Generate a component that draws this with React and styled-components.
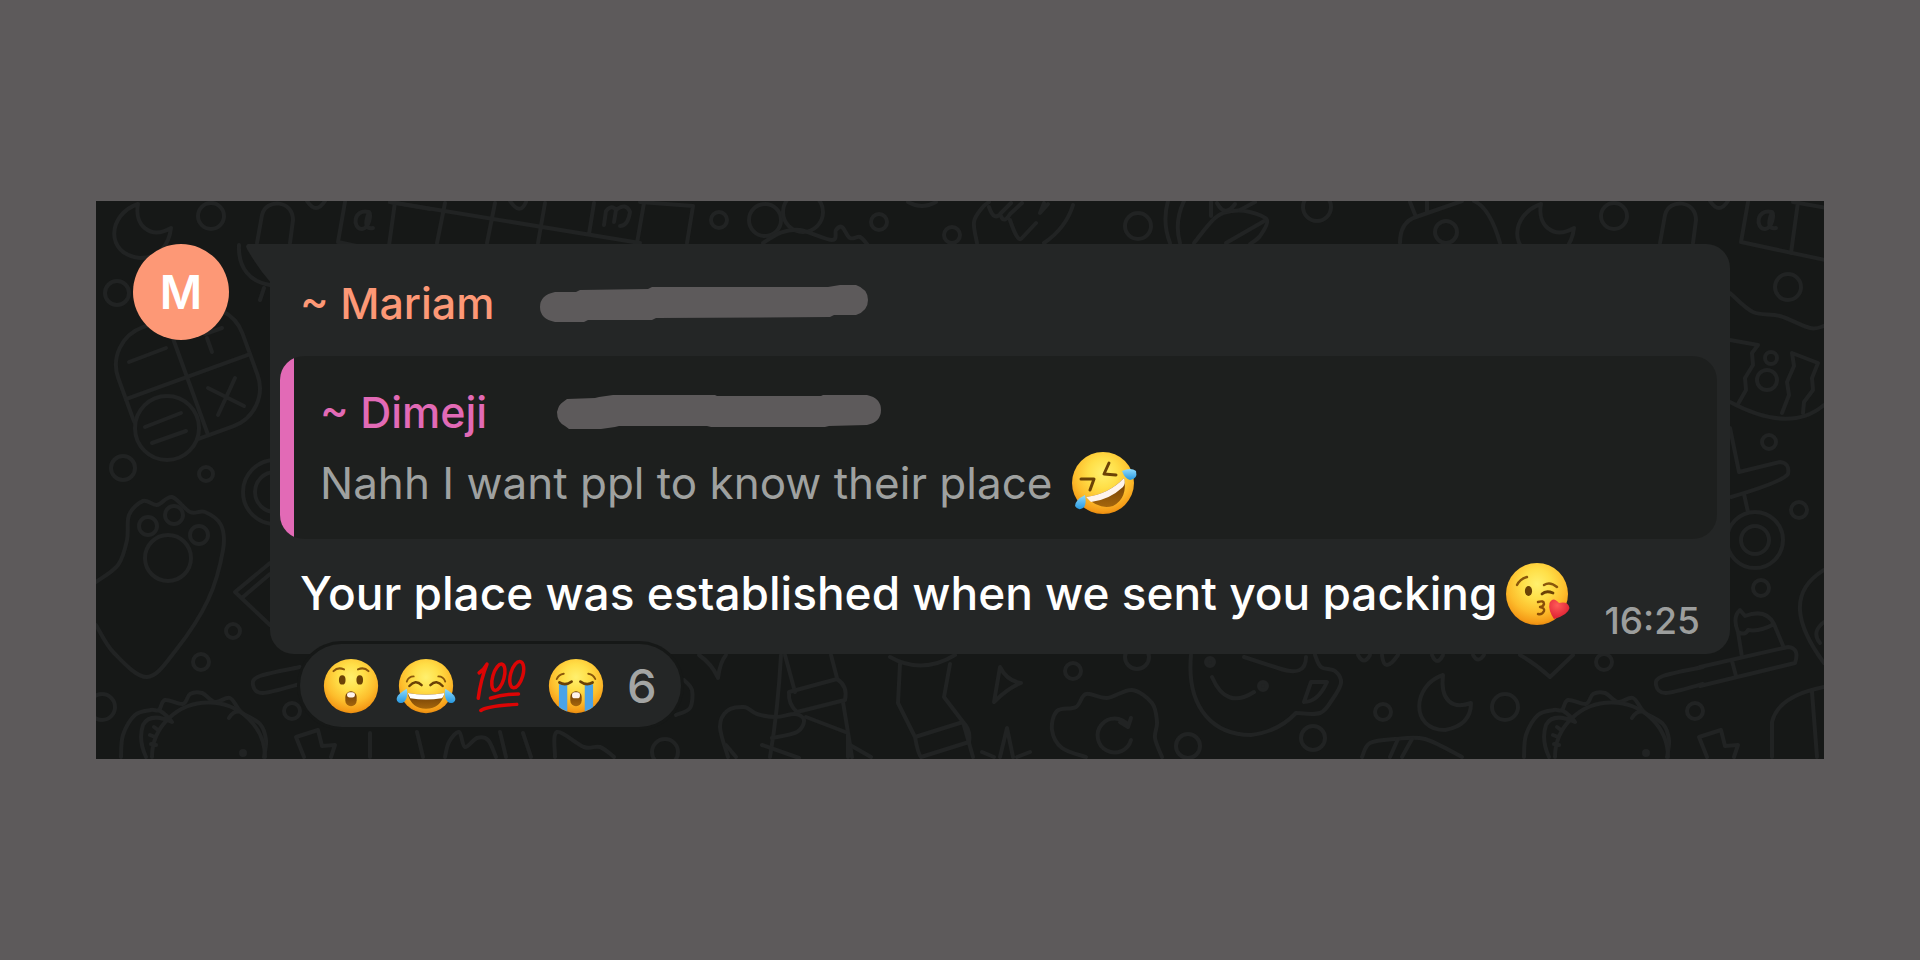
import React from "react";
import styled, { createGlobalStyle } from "styled-components";

const GlobalStyle = createGlobalStyle`
  *, *::before, *::after { box-sizing: border-box; }
  body {
    margin: 0;
    background: #5d5a5b;
    font-family: Inter, "Liberation Sans", sans-serif;
  }
`;

const Page = styled.main`
  min-height: 100vh;
  padding: 0 5%;
  display: flex;
  align-items: center;
`;

const Chat = styled.section`
  position: relative;
  isolation: isolate;
  flex: 1;
  min-width: 0;
  display: flex;
  gap: 41px;
  align-items: flex-start;
  padding: 43px 94px 32px 37px;
  background: #161817;
  overflow: hidden;
`;

const Wallpaper = styled.svg`
  position: absolute;
  inset: 0;
  z-index: -1;
  width: 100%;
  height: 100%;
  fill: none;
  stroke: #212323;
  stroke-width: 4;
  stroke-linecap: round;
  stroke-linejoin: round;
`;

const Avatar = styled.div`
  flex: none;
  display: grid;
  place-items: center;
  width: 96px;
  height: 96px;
  border-radius: 50%;
  background: #fd9876;
  color: #fff;
  font-size: 46px;
  font-weight: 600;
`;

const Message = styled.article`
  flex: 1;
  min-width: 0;
`;

const Bubble = styled.div`
  position: relative;
  background: #242626;
  border-radius: 0 24px 24px 24px;
`;

const Tail = styled.svg`
  position: absolute;
  top: 0;
  right: 100%;
  width: 24px;
  height: 40px;
  fill: #242626;
`;

const Header = styled.header`
  display: flex;
  align-items: center;
  padding: 32px 30px 26px;
`;

const Sender = styled.span`
  min-width: 237px;
  color: ${(p) => p.$color};
  font-size: 43px;
  font-weight: 500;
  line-height: 54px;
  white-space: nowrap;
`;

const Redaction = styled.svg`
  flex: none;
  width: 332px;
  height: 40px;
  fill: #5d5a5b;
  overflow: visible;
`;

const Quote = styled.blockquote`
  margin: 0 13px 0 10px;
  padding: 20px 28px 21px 40px;
  border-radius: 24px;
  background: linear-gradient(to right, #e26ab6 14px, #1d1f1e 14px);
`;

const QuoteRow = styled.div`
  display: flex;
  align-items: center;
  gap: ${(p) => p.$gap || 0}px;
  height: 71px;
`;

const QuoteText = styled.p`
  margin: 0;
  color: #9fa1a0;
  font-size: 44px;
  line-height: 54px;
  white-space: nowrap;
`;

const Body = styled.div`
  display: flex;
  align-items: center;
  gap: 8px;
  padding: 20px 30px 26px;
`;

const BodyText = styled.p`
  margin: 0;
  color: #fff;
  font-size: 46px;
  font-weight: 500;
  line-height: 69px;
  white-space: nowrap;
`;

const Time = styled.time`
  align-self: flex-end;
  margin: 0 0 -6px auto;
  color: #9c9e9d;
  font-size: 37px;
  font-weight: 500;
  line-height: 26px;
`;

const Reactions = styled.button`
  position: relative;
  display: flex;
  align-items: center;
  gap: 19px;
  height: 83px;
  margin: -10px 0 0 30px;
  padding: 0 24px 0 23px;
  border: 0;
  border-radius: 42px;
  background: #242626;
  box-shadow: 0 0 0 3px #161817;
  color: #a3a5a4;
  font: inherit;
  font-size: 47px;
  font-weight: 500;
`;

const Count = styled.span`
  margin-left: 4px;
`;

const EmojiArt = styled.svg`
  flex: none;
  width: ${(p) => p.$size}px;
  height: ${(p) => p.$size}px;
  overflow: visible;
  fill: none;
  stroke-linecap: round;
  stroke-linejoin: round;
`;

/* Smooth line through a flat list of x, y pairs. */
const curve = (flat) => {
  const pts = [];
  for (let i = 0; i < flat.length; i += 2) pts.push([flat[i], flat[i + 1]]);
  const n = pts.length;
  const at = (i) => pts[Math.max(0, Math.min(n - 1, i))];
  let d = `M${pts[0][0]} ${pts[0][1]}`;
  for (let i = 0; i < n - 1; i++) {
    const [a, b, c, e] = [at(i - 1), at(i), at(i + 1), at(i + 2)];
    d += ` C${b[0] + (c[0] - a[0]) / 6} ${b[1] + (c[1] - a[1]) / 6} ${c[0] - (e[0] - b[0]) / 6} ${c[1] - (e[1] - b[1]) / 6} ${c[0]} ${c[1]}`;
  }
  return d;
};

/* Doodles that appear at both ends of the wallpaper tile. */
function TileStart() {
  return (
    <g>
      <path d="M138 204 C108 214 104 254 140 258 C160 258 169 244 171 228 C150 240 134 225 138 204Z" />
      <circle cx="211" cy="216" r="13" />
      <path d="M257 243 L262 215 C266 198 293 200 293 220 L290 243" />
      <path d="M307 201 Q316 215 325 201" />
      <path d="M345 202 L338 242 L422 260 M395 202 L388 253 M390 202 L430 209" />
      <path d="M369 212 C353 208 352 229 362 229 C370 228 371 214 369 212 Q362 230 373 228" />
      <path d={curve([300, 667, 260, 676, 253, 685, 263, 693, 300, 684])} />
      <circle cx="201" cy="662" r="8" />
      <circle cx="292" cy="711" r="8" />
      <circle cx="102" cy="707" r="13" />
      <path d={curve([121, 757, 123, 735, 135, 715, 151, 710, 159, 710, 165, 700, 183, 704, 190, 694, 202, 693, 215, 702, 230, 698, 241, 712, 260, 724, 266, 740, 264, 757])} />
      <path d="M152 757 A56 54 0 0 1 265 757 M159 710 Q168 716 172 722 Q150 712 143 725 Q138 740 146 757 M229 718 Q234 710 241 712 M154 727 l4 3 M150 735 l5 2 M151 744 l5 1" />
      <circle cx="243" cy="753" r="2" />
      <path d="M304 757 L296 737 L318 730 L322 746 L335 745 L331 757" />
    </g>
  );
}

function ChatWallpaper() {
  return (
    <Wallpaper viewBox="96 201 1728 558" preserveAspectRatio="xMidYMid slice" aria-hidden="true">
      <TileStart />
      <g transform="translate(1403 0)">
        <TileStart />
      </g>

      <circle cx="117" cy="293" r="12" />
      <circle cx="123" cy="468" r="12" />
      <circle cx="206" cy="474" r="7" />
      <path d="M239 245 C238 268 250 282 270 285 M264 288 L260 300" />
      <g transform="rotate(-20 187 377)">
        <rect x="122" y="315" width="132" height="124" rx="40" />
        <path d="M187 315 V439 M122 377 H254" />
      </g>
      <circle cx="167" cy="428" r="32" fill="#161817" />
      <path d="M129 362 L166 348 M145 427 L181 413 M152 443 L186 431 M208 388 L244 406 M235 378 L218 415 M207 338 L212 352 M205 334 L222 328" />
      <circle cx="275" cy="492" r="32" />
      <circle cx="275" cy="492" r="20" />

      <path d={curve([96, 582, 118, 565, 127, 540, 129, 515, 143, 501, 157, 505, 172, 497, 190, 512, 205, 512, 221, 525, 223, 550, 208, 600, 176, 650, 147, 677, 114, 653, 96, 625])} />
      <circle cx="148" cy="526" r="9" />
      <circle cx="174" cy="515" r="9" />
      <circle cx="199" cy="535" r="9" />
      <circle cx="168" cy="558" r="23" />
      <path d="M270 563 L235 592 L270 625 M270 574 L243 597" />
      <circle cx="233" cy="631" r="7" />

      <path d="M390 202 L640 243 M445 203 L437 243 M495 203 L487 243 M545 203 L538 243 M594 203 L589 234 M644 203 L637 243 M693 206 L687 243 M640 202 L693 206" />
      <path d="M604 225 L606 211 Q612 204 616 210 L614 222 M616 210 Q626 202 630 212 Q628 226 620 226 M510 201 Q520 216 526 202" />
      <circle cx="719" cy="220" r="8" />
      <circle cx="765" cy="220" r="16" />
      <circle cx="803" cy="212" r="20" />
      <path d={curve([763, 243, 780, 233, 800, 230, 832, 240, 836, 230, 842, 227, 850, 238, 860, 237, 867, 244])} />
      <circle cx="879" cy="222" r="8" />
      <circle cx="952" cy="235" r="8" />
      <path d="M908 202 Q922 210 936 202" />
      <path d={curve([977, 243, 974, 222, 982, 208, 989, 202])} />
      <path d="M989 207 Q994 222 1001 213 L1011 203 M1001 216 Q1004 224 1010 214 L1022 203 M1010 220 Q1018 244 1022 238 L1036 223 M1044 203 L1040 213 L1048 204 M1073 205 Q1066 228 1044 243" />
      <circle cx="1138" cy="226" r="13" />
      <path d="M1168 201 Q1162 222 1170 243 M1184 201 Q1174 222 1180 243 M1211 202 V216 M1226 243 L1266 220" />
      <path d={curve([1194, 243, 1215, 218, 1232, 211, 1250, 212, 1267, 220, 1260, 236, 1250, 244])} />
      <path d="M1217 203 Q1225 218 1235 204 M1240 210 L1255 202" />
      <circle cx="1317" cy="207" r="14" />
      <path d="M1400 243 Q1400 222 1416 217 L1462 201 M1410 202 L1416 217 M1427 202 V213 M1474 201 Q1490 208 1500 243" />
      <circle cx="1446" cy="232" r="11" />

      <path d="M370 733 V757 M417 732 L423 757 M500 732 L506 757 M523 733 L531 757" />
      <path d={curve([445, 757, 449, 742, 459, 732, 465, 747, 477, 738, 488, 740, 496, 757])} />
      <path d={curve([555, 757, 557, 732, 584, 747, 600, 747, 614, 757])} />
      <circle cx="665" cy="752" r="13" />
      <path d={curve([684, 680, 692, 690, 690, 708, 676, 715])} />
      <path d="M699 655 Q712 664 718 678 Q720 662 726 655" />
      <path d="M781 655 Q778 710 770 757 M785 655 L795 692 M831 655 L837 678 M843 702 L852 757" />
      <path d="M789 692 L837 679 Q848 686 845 700 L797 712 Q788 704 789 692Z" />
      <path d={curve([728, 757, 720, 727, 727, 711, 744, 707, 757, 714, 776, 717, 795, 714, 804, 720, 797, 732, 772, 738])} />
      <path d="M806 717 L848 733 V757 M850 745 L871 757 M762 745 L799 758 M726 745 L736 757" />
      <path d="M890 657 Q922 675 955 655 M900 664 L898 703 L915 737 Q918 754 921 757 L969 742 M950 664 L944 697 L963 722 L973 757 M915 737 L963 722 Q971 730 969 742" />
      <path d="M1000 667 Q1007 681 1021 683 Q1008 688 994 702Z" />
      <circle cx="1073" cy="671" r="8" />
      <circle cx="1137" cy="657" r="12" />
      <circle cx="1188" cy="746" r="12" />
      <path d="M982 752 L994 757 M1000 757 L1007 728 L1013 757 M1017 757 L1030 752" />
      <path d={curve([1086, 757, 1062, 748, 1052, 730, 1057, 711, 1076, 707, 1086, 694, 1107, 698, 1132, 690, 1152, 703, 1157, 722, 1155, 738, 1162, 757])} />
      <path d="M1128 725 A17 17 0 1 0 1131 740 M1131 718 L1128 727 L1120 722" />

      <path d="M1191 655 C1186 710 1215 735 1251 735 Q1278 732 1296 713" />
      <path d={curve([1296, 713, 1320, 713, 1332, 700, 1341, 683, 1335, 671, 1321, 667, 1315, 655])} />
      <path d="M1244 657 L1278 668 Q1306 678 1306 657 M1311 682 L1304 702 Q1318 702 1327 682Z M1212 677 Q1226 710 1254 692" />
      <circle cx="1210" cy="662" r="4" fill="#212323" />
      <circle cx="1263" cy="686" r="4" fill="#212323" />
      <circle cx="1383" cy="712" r="8" />
      <circle cx="1313" cy="738" r="12" />
      <path d="M1358 655 Q1364 666 1370 655 M1382 655 Q1384 675 1398 655 M1432 655 Q1437 667 1443 655 M1473 655 Q1478 664 1484 655" />
      <path d="M1443 675 C1412 685 1410 730 1445 730 C1462 727 1471 718 1471 703 C1452 710 1440 700 1443 675Z" />
      <path d="M1520 655 Q1536 664 1550 677 L1573 655" />
      <path d={curve([1362, 757, 1370, 743, 1395, 739, 1425, 739, 1462, 757])} />
      <path d="M1398 739 L1390 757 M1412 739 L1402 757" />

      <circle cx="1788" cy="287" r="13" />
      <path d={curve([1730, 293, 1753, 312, 1780, 316, 1810, 328, 1824, 326])} />
      <path d="M1730 340 L1758 345 L1752 353 L1753 365 L1745 378 L1746 390 L1738 404 M1792 353 L1818 363 L1812 378 L1813 390 L1804 402 L1803 413 M1792 353 L1794 366 L1787 382 L1789 395 L1782 413" />
      <path d="M1730 402 Q1790 434 1824 405" />
      <circle cx="1767" cy="380" r="10" />
      <circle cx="1771" cy="358" r="6" />
      <circle cx="1769" cy="442" r="7" />
      <path d="M1730 428 L1739 472 L1780 462 Q1790 463 1788 474 Q1782 482 1731 497 M1744 494 L1748 512" />
      <circle cx="1755" cy="540" r="28" />
      <circle cx="1755" cy="540" r="14" />
      <circle cx="1799" cy="510" r="8" />
      <circle cx="1761" cy="588" r="8" />
      <path d="M1824 570 C1788 592 1796 625 1824 663 M1824 622 Q1811 632 1820 643" />
      <path d="M1742 657 L1738 632 Q1732 617 1740 610 L1745 616 Q1766 608 1774 624 L1784 648 M1738 632 Q1745 636 1748 630 Q1760 632 1774 624" />
      <path d="M1700 667 L1788 647 Q1800 648 1795 663 L1700 686 M1732 661 L1736 676" />
      <path d="M1772 757 V722 Q1778 696 1824 687 M1812 692 L1817 757" />
    </Wallpaper>
  );
}

const GradientDefs = styled.svg`
  position: absolute;
  width: 0;
  height: 0;
`;

function EmojiGradients() {
  return (
    <GradientDefs aria-hidden="true">
      <defs>
        <radialGradient id="skin" cx="0.5" cy="0.34" r="0.68">
          <stop offset="0" stopColor="#fff06e" />
          <stop offset="0.35" stopColor="#ffdf48" />
          <stop offset="0.68" stopColor="#fdbd2c" />
          <stop offset="0.9" stopColor="#f59c18" />
          <stop offset="1" stopColor="#e5860c" />
        </radialGradient>
        <linearGradient id="mouth" x1="0" y1="0" x2="0" y2="1">
          <stop offset="0" stopColor="#6b3a05" />
          <stop offset="1" stopColor="#a5660c" />
        </linearGradient>
        <linearGradient id="tear" x1="0" y1="0" x2="0" y2="1">
          <stop offset="0" stopColor="#8fdcff" />
          <stop offset="1" stopColor="#2798e0" />
        </linearGradient>
        <radialGradient id="heart" cx="0.4" cy="0.3" r="0.8">
          <stop offset="0" stopColor="#ff5a58" />
          <stop offset="1" stopColor="#d8172c" />
        </radialGradient>
      </defs>
    </GradientDefs>
  );
}

function Emoji({ label, size = 56, children }) {
  return (
    <EmojiArt viewBox="0 0 64 64" $size={size} role="img" aria-label={label}>
      {children}
    </EmojiArt>
  );
}

const Face = () => <circle cx="32" cy="32" r="31" fill="url(#skin)" />;

const Rofl = () => (
  <Emoji label="Rolling on the floor laughing" size={64}>
    <Face />
    <path d="M38 12 L33 23 L45 24 M10 28 L23 28 L19 39" stroke="#6b4206" strokeWidth="3" />
    <path d="M15 46 Q38 43 53 27 Q57 47 42 55 Q28 59 15 46Z" fill="url(#mouth)" />
    <path d="M15 46 Q38 43 53 27 Q55 32 52 36 Q38 49 20 51Z" fill="#fff4ec" />
    <path d="M51 20 Q60 16 65 20 Q67 28 59 29 Q54 28 51 20Z" fill="url(#tear)" />
    <path d="M14 44 Q16 54 12 57 Q7 60 4 55 Q4 49 14 44Z" fill="url(#tear)" />
  </Emoji>
);

const Kiss = () => (
  <Emoji label="Face blowing a kiss" size={64}>
    <Face />
    <path d="M12 23 Q15 17 22 15 M39 23 Q45 19 52 25" stroke="#8a570b" strokeWidth="2.4" />
    <ellipse cx="23.5" cy="29" rx="3.6" ry="5" fill="#6b4206" />
    <path d="M37 32 Q41 28 48 31" stroke="#6b4206" strokeWidth="2.8" />
    <path d="M33 40 Q39 38 39 42 Q38 45 35 45 Q40 46 39 49 Q37 53 33 52" stroke="#8a4f08" strokeWidth="2.4" />
    <path d="M49 57 Q43 48 44.500 41 Q48 34 54 41 Q63 39 64.500 46 Q63 53 49 57Z" fill="url(#heart)" />
  </Emoji>
);

const Astonished = () => (
  <Emoji label="Astonished face">
    <Face />
    <path d="M12 15 Q17 10 24 13 M40 13 Q47 10 52 15" stroke="#8a570b" strokeWidth="2.4" />
    <ellipse cx="22" cy="25" rx="3.8" ry="5.400" fill="#6b4206" />
    <ellipse cx="42" cy="25" rx="3.8" ry="5.400" fill="#6b4206" />
    <rect x="25.500" y="38" width="13" height="17" rx="6.500" fill="url(#mouth)" />
    <rect x="27.500" y="39" width="9" height="6" rx="3" fill="#fff4ec" />
  </Emoji>
);

const Joy = () => (
  <Emoji label="Face with tears of joy">
    <Face />
    <path d="M10 27 Q12 21 18 21 M46 21 Q52 21 54 27" stroke="#8a570b" strokeWidth="2" />
    <path d="M13 32 Q20 24 27 31 M37 31 Q44 24 51 32" stroke="#6b4206" strokeWidth="2.8" />
    <path d="M11 40 Q32 44 53 40 Q49 58 32 58 Q15 58 11 40Z" fill="url(#mouth)" />
    <path d="M11 40 Q32 44 53 40 Q52 45 50 46 Q32 49 14 46Z" fill="#fff" />
    <path d="M10 35 Q12 43 8 49 Q3 54 -1 49 Q-4 43 10 35Z" fill="url(#tear)" />
    <path d="M54 35 Q52 43 56 49 Q61 54 65 49 Q68 43 54 35Z" fill="url(#tear)" />
  </Emoji>
);

const Hundred = () => (
  <Emoji label="Hundred points">
    <g stroke="#dc0505" strokeWidth="4">
      <path d="M7 17 Q12 14 16 7 Q9 24 6 46" />
      <ellipse cx="29" cy="22" rx="6.500" ry="15.500" transform="rotate(16 29 22)" />
      <ellipse cx="50" cy="19" rx="7" ry="15.500" transform="rotate(16 50 19)" />
      <path d="M20 46 Q34 41 52 41" />
      <path d="M9 60 Q16 55 50 53" />
    </g>
  </Emoji>
);

const Sob = () => (
  <Emoji label="Loudly crying face">
    <Face />
    <path d="M10 24 Q12 19 18 18 M46 18 Q52 19 54 24" stroke="#8a570b" strokeWidth="2.2" />
    <path d="M12.500 56 V30 H22 V61 Q16 59 12.500 56Z M42 61 V30 H51.500 V56 Q48 59 42 61Z" fill="#4aa3e8" />
    <path d="M13 28 Q20 32 27 27 M37 27 Q44 32 51 28" stroke="#6b4206" strokeWidth="3" />
    <rect x="25.500" y="38" width="13" height="17" rx="6.500" fill="url(#mouth)" />
    <rect x="27.500" y="39" width="9" height="7" rx="3" fill="#fff4ec" />
  </Emoji>
);

export default function App() {
  return (
    <>
      <GlobalStyle />
      <EmojiGradients />
      <Page>
        <Chat>
          <ChatWallpaper />
          <Avatar>M</Avatar>
          <Message>
            <Bubble>
              <Tail viewBox="0 0 24 40" aria-hidden="true">
                <path d="M25 0 H2 Q-1 1 1 5 Q12 24 25 39Z" />
              </Tail>
              <Header>
                <Sender $color="#fd9876">~ Mariam</Sender>
                <Redaction viewBox="-1 -4 332 40" aria-hidden="true">
                  <path d="M17 5 L38 5 L42 3 L110 2 L114 0 L290 0 L302 -2 L318 -2 Q330 2 330 13 Q330 24 318 28 L296 28 L292 30 L118 31 L114 33 L50 33 L46 35 L17 35 Q2 32 2 20 Q2 8 17 5Z" />
                </Redaction>
              </Header>
              <Quote>
                <QuoteRow>
                  <Sender $color="#e26ab6">~ Dimeji</Sender>
                  <Redaction viewBox="0 0 332 40" aria-hidden="true">
                    <path d="M10 7 L38 6 L42 5 L56 3 L158 3 L160 4 L264 4 L266 3 L310 3 Q324 6 324 18 Q324 30 310 33 L272 34 L268 35 L154 35 L150 34 L62 34 L58 35 L44 37 L12 37 L8 34 Q0 30 0 20 Q2 12 6 10Z" />
                  </Redaction>
                </QuoteRow>
                <QuoteRow $gap={19}>
                  <QuoteText>Nahh I want ppl to know their place</QuoteText>
                  <Rofl />
                </QuoteRow>
              </Quote>
              <Body>
                <BodyText>Your place was established when we sent you packing</BodyText>
                <Kiss />
                <Time>16:25</Time>
              </Body>
            </Bubble>
            <Reactions type="button" aria-label="6 reactions">
              <Astonished />
              <Joy />
              <Hundred />
              <Sob />
              <Count>6</Count>
            </Reactions>
          </Message>
        </Chat>
      </Page>
    </>
  );
}
